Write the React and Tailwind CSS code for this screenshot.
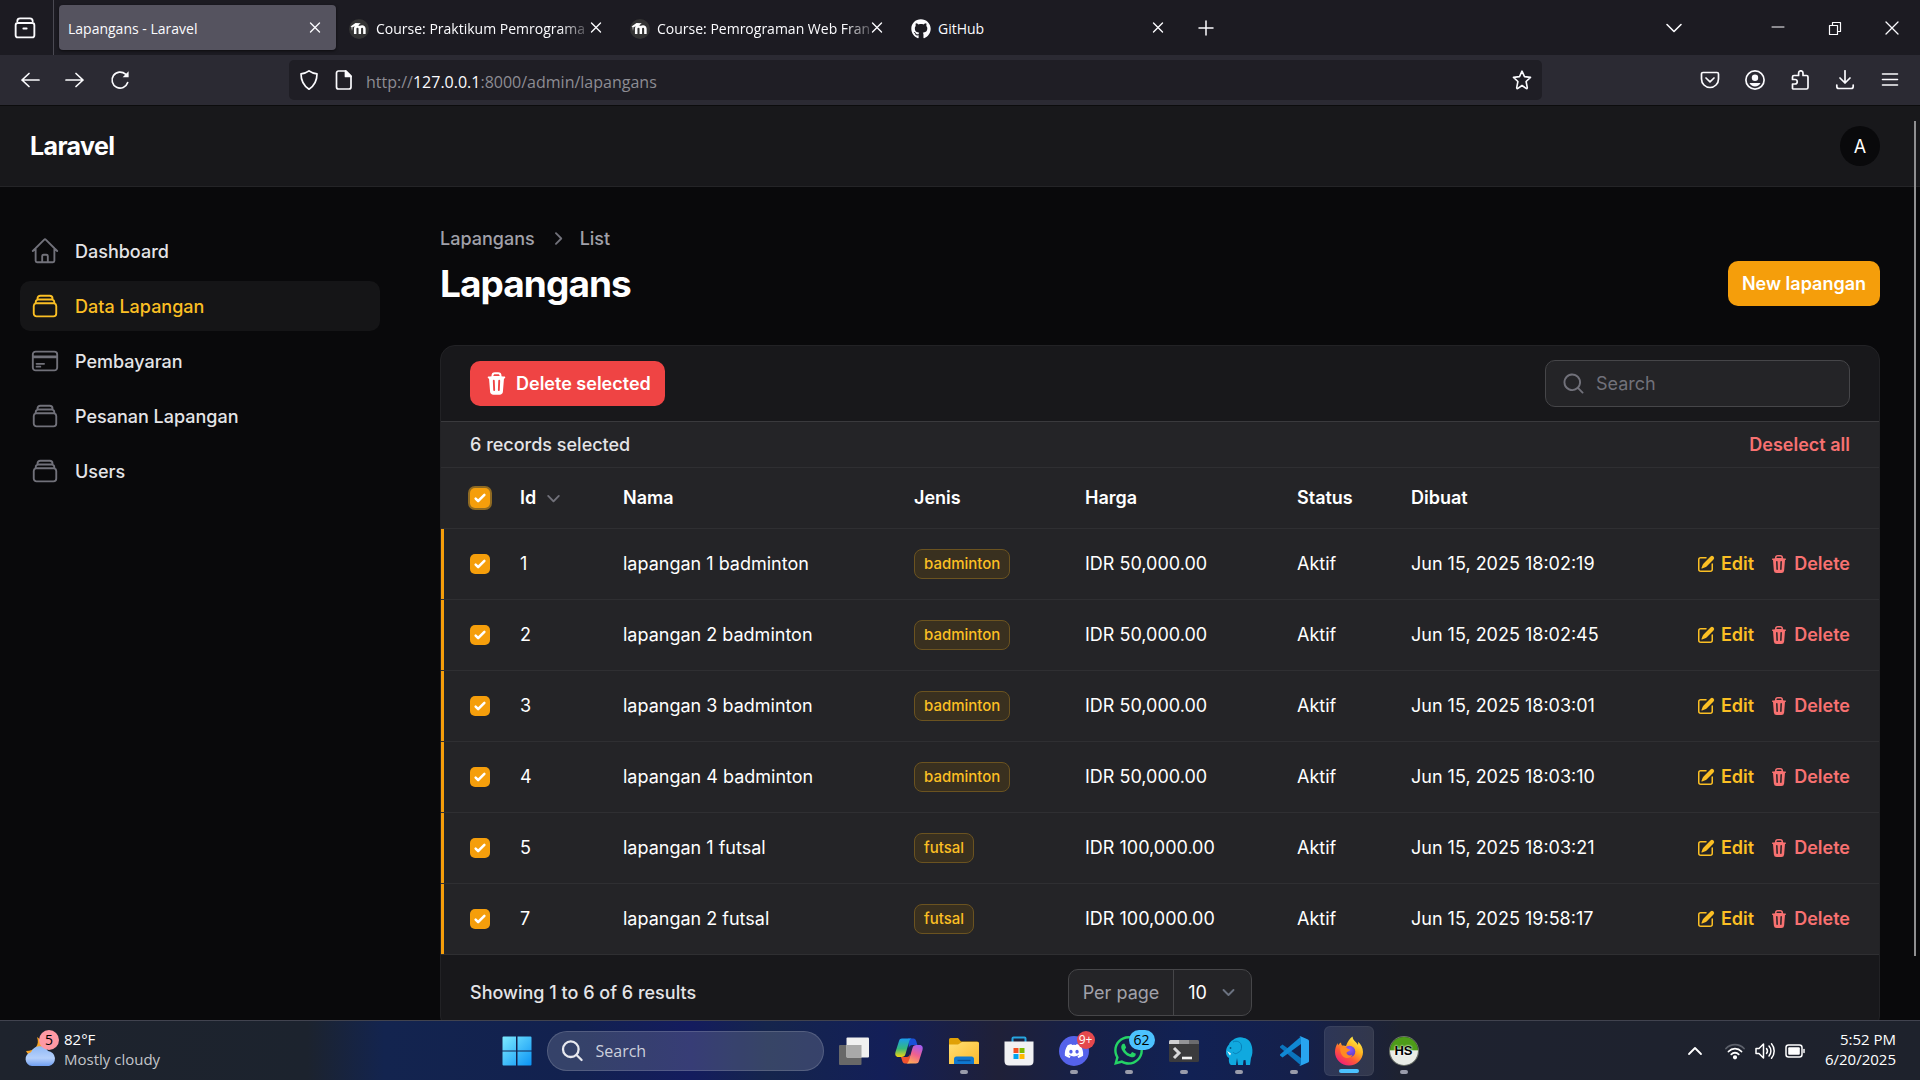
import React from "react";
import {
  HiOutlineHome,
  HiOutlineRectangleStack,
  HiOutlineCreditCard,
  HiMiniTrash,
  HiMiniPencilSquare,
  HiMiniMagnifyingGlass,
  HiMiniChevronDown,
  HiMiniChevronRight,
} from "react-icons/hi2";
import { FaGithub, FaDiscord, FaWhatsapp } from "react-icons/fa";

const CHROME_FONT = "font-['Open_Sans','Noto_Sans',sans-serif]";

function Line({ d, className = "size-5", w = 1.6, children }) {
  return (
    <svg
      viewBox="0 0 20 20"
      className={className}
      fill="none"
      stroke="currentColor"
      strokeWidth={w}
      strokeLinecap="round"
      strokeLinejoin="round"
      aria-hidden="true"
    >
      {d && <path d={d} />}
      {children}
    </svg>
  );
}

function MoodleIcon() {
  return (
    <svg viewBox="0 0 20 20" className="size-5 shrink-0" aria-hidden="true">
      <circle cx="10" cy="10" r="10" fill="#343434" />
      <path
        d="M6.2 15V9.8a2.3 2.3 0 0 1 4.6 0V15M10.8 15V9.8a2.3 2.3 0 0 1 4.6 0V15"
        fill="none"
        stroke="#fff"
        strokeWidth="2.5"
      />
      <path d="M1.5 7.6 6.5 4l5.2.3-3.2 2.6-5 1.2-.5 4-.5-4z" fill="#fff" />
    </svg>
  );
}

const tabs = [
  { title: "Lapangans - Laravel", active: true },
  { title: "Course: Praktikum Pemrograma", icon: <MoodleIcon />, fade: true },
  { title: "Course: Pemrograman Web Fran", icon: <MoodleIcon />, fade: true },
  { title: "GitHub", icon: <FaGithub className="size-5 shrink-0" /> },
];

function Tab({ title, icon, active, fade }) {
  return (
    <div
      className={`flex h-[45px] w-[277px] items-center rounded pl-[9px] pr-2 ${
        active ? "bg-[#55535f] shadow-[0_1px_3px_rgba(0,0,0,0.6)]" : ""
      }`}
    >
      <button className="flex min-w-0 flex-1 items-center gap-[7px] pt-0.5 text-left">
        {icon}
        <span
          className={`whitespace-nowrap ${
            fade ? "[mask-image:linear-gradient(to_right,black_88%,rgba(0,0,0,0.25))]" : ""
          }`}
        >
          {title}
        </span>
      </button>
      <button aria-label="Close tab" className="grid w-[26px] shrink-0 place-items-center">
        <Line className="size-5" d="M5.5 5l9 9M14.5 5l-9 9" w={1.4} />
      </button>
    </div>
  );
}

function TabBar() {
  return (
    <div className="flex h-[55px] shrink-0 items-center bg-[#1c1b22] text-[14px]">
      <div className="flex h-full w-[54px] shrink-0 items-center justify-center border-r border-[#4a4952] pr-1">
        <button aria-label="Recent browsing">
          <Line className="size-[22px]" w={1.7}>
            <path d="M3 3.8C3 2 4 1.2 5.5 1.2h9C16 1.2 17 2 17 3.8" />
            <rect x="1.5" y="5.5" width="17" height="13" rx="2" />
            <path d="M8.5 10.5h3" w="2" />
          </Line>
        </button>
      </div>
      <div className="ml-[5px] flex gap-1">
        {tabs.map((t, i) => (
          <Tab key={i} {...t} />
        ))}
      </div>
      <button aria-label="New tab" className="ml-[17px]">
        <Line className="size-5" d="M10 3v14M3 10h14" w={1.5} />
      </button>
      <div className="ml-auto flex items-center pr-[18px]">
        <button aria-label="List all tabs" className="mr-[84px]">
          <Line className="size-5" d="M3 6.5l7 7 7-7" w={1.6} />
        </button>
        <div className="flex items-center gap-[37px]">
          <button aria-label="Minimize">
            <Line className="size-5" d="M4 9h12" w={1} />
          </button>
          <button aria-label="Restore">
            <Line className="size-5" w={1.2}>
              <path d="M4.5 7.5h8v9h-8zM7.5 7.5v-3h8v9h-3" />
            </Line>
          </button>
          <button aria-label="Close">
            <Line className="size-5" d="M4 4l12 12M16 4L4 16" w={1.3} />
          </button>
        </div>
      </div>
    </div>
  );
}

function AddressBar() {
  return (
    <div className="flex h-[51px] shrink-0 items-center border-b border-[#0c0c0d] bg-[#2b2a33]">
      <div className="flex w-[289px] shrink-0 items-center gap-[25px] pl-5">
        <button aria-label="Back">
          <Line d="M9 3.5L2 10l7 6.5M2 10h17" w={1.7} />
        </button>
        <button aria-label="Forward">
          <Line d="M11 3.5L18 10l-7 6.5M18 10H1" w={1.7} />
        </button>
        <button aria-label="Reload">
          <Line w={1.7}>
            <path d="M17.7 12.5A8 8 0 1 1 15.5 4.2L17 5.6" />
            <path d="M18.6 1.2v6h-6z" fill="currentColor" stroke="none" />
          </Line>
        </button>
      </div>
      <div className="flex h-10 flex-1 items-center rounded-[5px] bg-[#1f1e25] pl-2.5 pr-2.5">
        <Line
          className="size-5 shrink-0"
          d="M10 .8c2.2 1.7 4.8 2.6 8 3 0 6.7-2.3 11.8-8 15.4C4.3 15.6 2 10.5 2 3.8c3.2-.4 5.800-1.300 8-3z"
          w={1.7}
        />
        <Line className="ml-[15px] size-5 shrink-0" w={1.7}>
          <path d="M4.500 1h7.500l5 5v11a2 2 0 0 1-2 2H4.500a2 2 0 0 1-2-2V3a2 2 0 0 1 2-2z" />
          <path d="M11.500 1v5.500H17z" fill="currentColor" />
        </Line>
        <a href="#url" className="ml-3 flex-1 pt-1 text-[16px] leading-6 text-[#8d8c93]">
          http://<span className="text-[#fbfbfe]">127.0.0.1</span>:8000/admin/lapangans
        </a>
        <button aria-label="Bookmark this page">
          <Line
            d="M10 1.200l2.500 5.400 6 .8-4.400 4.100 1.200 6.100c.1.900-.5 1.200-1.200.8L10 15.500l-4.100 2.900c-.7.400-1.300.1-1.200-.8l1.200-6.100L1.500 7.400l6-.8z"
            w={1.6}
          />
        </button>
      </div>
      <div className="flex w-[378px] shrink-0 items-center justify-end gap-[25px] pr-5">
        <button aria-label="Save to Pocket">
          <Line w={1.7}>
            <path d="M3 2.500h14a1.500 1.500 0 0 1 1.500 1.500v5a8.500 8.500 0 0 1-17 0V4A1.500 1.500 0 0 1 3 2.500z" />
            <path d="M6 8l4 3.800L14 8" />
          </Line>
        </button>
        <button aria-label="Account">
          <Line w={1.7}>
            <circle cx="10" cy="10" r="9.100" />
            <circle cx="10" cy="7.800" r="3.200" fill="currentColor" stroke="none" />
            <path d="M4.500 13h11c-1 2.200-3 3.500-5.500 3.500S5.500 15.200 4.500 13z" fill="currentColor" stroke="none" />
          </Line>
        </button>
        <button aria-label="Extensions">
          <Line
            d="M3 19h13.500a1.500 1.500 0 0 0 1.500-1.500V7A1.500 1.500 0 0 0 16.500 5.500H13V3a2.200 2.200 0 0 0-4.400 0v2.500H4A1.500 1.500 0 0 0 2.500 7v2.500H5a2 2 0 0 1 0 4.500H2.500v4.500z"
            w={1.7}
          />
        </button>
        <button aria-label="Downloads">
          <Line d="M10 .8V13M5 8l5 5 5-5M1.800 15v1.500A2 2 0 0 0 3.800 18.500h12.400a2 2 0 0 0 2-2V15" w={1.7} />
        </button>
        <button aria-label="Open menu">
          <Line d="M2.500 4h15M2.500 9.500h15M2.500 15h15" w={1.6} />
        </button>
      </div>
    </div>
  );
}

const navItems = [
  { label: "Dashboard", Icon: HiOutlineHome },
  { label: "Data Lapangan", Icon: HiOutlineRectangleStack, active: true },
  { label: "Pembayaran", Icon: HiOutlineCreditCard },
  { label: "Pesanan Lapangan", Icon: HiOutlineRectangleStack },
  { label: "Users", Icon: HiOutlineRectangleStack },
];

function Sidebar() {
  return (
    <nav className="flex w-[400px] shrink-0 flex-col gap-[5px] px-5 pt-[39px]">
      {navItems.map(({ label, Icon, active }) => (
        <a
          key={label}
          href={"#" + label}
          className={`flex h-[50px] items-center gap-[15px] rounded-[10px] px-2.5 font-medium ${
            active ? "bg-[#151517] text-[#fbbf24]" : "text-[#e4e4e7]"
          }`}
        >
          <Icon className={`size-[30px] ${active ? "" : "text-[#71717a]"}`} />
          {label}
        </a>
      ))}
    </nav>
  );
}

const rows = [
  [1, "lapangan 1 badminton", "badminton", "IDR 50,000.00", "Jun 15, 2025 18:02:19"],
  [2, "lapangan 2 badminton", "badminton", "IDR 50,000.00", "Jun 15, 2025 18:02:45"],
  [3, "lapangan 3 badminton", "badminton", "IDR 50,000.00", "Jun 15, 2025 18:03:01"],
  [4, "lapangan 4 badminton", "badminton", "IDR 50,000.00", "Jun 15, 2025 18:03:10"],
  [5, "lapangan 1 futsal", "futsal", "IDR 100,000.00", "Jun 15, 2025 18:03:21"],
  [7, "lapangan 2 futsal", "futsal", "IDR 100,000.00", "Jun 15, 2025 19:58:17"],
];

function Check({ label, focused }) {
  return (
    <span className="grid size-5 place-items-center">
      <input
        type="checkbox"
        defaultChecked
        aria-label={label}
        className={`peer col-start-1 row-start-1 size-5 appearance-none rounded-[5px] bg-[#3f3f46] checked:bg-[#f59e0b] ${
          focused ? "ring-2 ring-[#8f6a22]" : ""
        }`}
      />
      <svg
        viewBox="0 0 16 16"
        fill="#fff"
        className="pointer-events-none invisible col-start-1 row-start-1 size-5 peer-checked:visible"
        aria-hidden="true"
      >
        <path d="M12.207 4.793a1 1 0 010 1.414l-5 5a1 1 0 01-1.414 0l-2-2a1 1 0 011.414-1.414L6.500 9.086l4.293-4.293a1 1 0 011.414 0z" />
      </svg>
    </span>
  );
}

function LapanganTable() {
  const th = "px-[15px] text-left font-semibold text-white";
  const td = "px-[15px] text-white whitespace-nowrap";
  return (
    <table className="w-full table-fixed border-collapse bg-[#242427]">
      <colgroup>
        <col className="w-16" />
        <col className="w-[103px]" />
        <col className="w-[291px]" />
        <col className="w-[171px]" />
        <col className="w-[212px]" />
        <col className="w-[114px]" />
        <col className="w-[230px]" />
        <col />
      </colgroup>
      <thead>
        <tr className="h-[60px] border-b border-[#2f2f32]">
          <th className="pl-[29px]">
            <Check label="Select all records" focused />
          </th>
          <th className={th}>
            <button className="flex items-center gap-[5px] font-semibold">
              Id
              <HiMiniChevronDown className="size-[25px] text-[#71717a]" />
            </button>
          </th>
          <th className={th}>Nama</th>
          <th className={th}>Jenis</th>
          <th className={th}>Harga</th>
          <th className={th}>Status</th>
          <th className={th}>Dibuat</th>
          <th aria-label="Actions" />
        </tr>
      </thead>
      <tbody>
        {rows.map(([id, nama, jenis, harga, dibuat]) => (
          <tr key={id} className="h-[71px] border-b border-[#2f2f32]">
            <td className="pl-[29px] shadow-[inset_3px_0_0_#f59e0b]">
              <Check label={"Select record " + id} />
            </td>
            <td className={td}>{id}</td>
            <td className={td}>{nama}</td>
            <td className={td}>
              <span className="inline-flex h-[30px] items-center rounded-[8px] border border-[#6b5320] bg-[#39301f] px-[9px] align-middle text-[15px] font-medium text-[#fbbf24]">
                {jenis}
              </span>
            </td>
            <td className={td}>{harga}</td>
            <td className={td}>Aktif</td>
            <td className={td}>{dibuat}</td>
            <td className="whitespace-nowrap pr-[29px]">
              <div className="flex justify-end gap-[15px] font-semibold">
                <a href={"#edit-" + id} className="flex items-center gap-[5px] text-[#fbbf24]">
                  <HiMiniPencilSquare className="size-5" />
                  Edit
                </a>
                <button className="flex items-center gap-[5px] text-[#f87171]">
                  <HiMiniTrash className="size-5" />
                  Delete
                </button>
              </div>
            </td>
          </tr>
        ))}
      </tbody>
    </table>
  );
}

function TableCard() {
  return (
    <section className="mt-[39px] overflow-hidden rounded-[15px] border border-[#222225] bg-[#18181b]">
      <div className="flex items-center justify-between border-b border-[#3a3a3d] px-[29px] py-3.5">
        <button className="flex h-[45px] items-center gap-[7px] rounded-[10px] bg-[#ef4444] px-3.5 font-semibold text-white">
          <HiMiniTrash className="size-[25px]" />
          Delete selected
        </button>
        <label className="flex h-[47px] w-[305px] items-center gap-2.5 rounded-[10px] border border-[#464649] bg-[#242427] px-[15px]">
          <HiMiniMagnifyingGlass className="size-[25px] shrink-0 text-[#71717a]" />
          <input
            type="search"
            aria-label="Search"
            placeholder="Search"
            className="min-w-0 flex-1 bg-transparent text-white outline-none placeholder:text-[#71717a]"
          />
        </label>
      </div>
      <div className="flex h-[46px] items-center justify-between border-b border-[#2f2f32] bg-[#242427] px-[29px]">
        <span className="font-medium text-[#e4e4e7]">6 records selected</span>
        <button className="font-semibold text-[#f87171]">Deselect all</button>
      </div>
      <LapanganTable />
      <div className="grid grid-cols-[1fr_auto_1fr] items-center px-[29px] py-3.5">
        <span className="font-medium text-[#e4e4e7]">Showing 1 to 6 of 6 results</span>
        <label className="flex h-[47px] items-center rounded-[10px] border border-[#464649] bg-[#242427]">
          <span className="flex h-full items-center border-r border-[#464649] px-3.5 text-[#a1a1aa]">Per page</span>
          <span className="grid items-center">
            <select
              defaultValue="10"
              className="col-start-1 row-start-1 w-[77px] appearance-none bg-transparent pl-3.5 text-white outline-none"
            >
              <option value="5">5</option>
              <option value="10">10</option>
              <option value="25">25</option>
              <option value="50">50</option>
            </select>
            <Line
              className="pointer-events-none col-start-1 row-start-1 mr-2.5 size-[25px] justify-self-end text-[#6b7280]"
              d="M6 8l4 4 4-4"
              w={1.5}
            />
          </span>
        </label>
      </div>
    </section>
  );
}

function AdminPage() {
  return (
    <div className="relative flex min-h-0 flex-1 flex-col overflow-hidden bg-[#09090b] font-['Inter',sans-serif] text-[18px] leading-[25px]">
      <header className="flex h-[81px] shrink-0 items-center justify-between border-b border-[#242427] bg-[#18181b] pl-[30px] pr-10">
        <a href="#home" className="text-[25px] font-bold tracking-tight text-white">
          Laravel
        </a>
        <button aria-label="User menu" className="grid size-10 place-items-center rounded-full bg-[#09090b] text-white">
          A
        </button>
      </header>
      <div className="flex">
        <Sidebar />
        <main className="min-w-0 flex-1 pl-10 pr-10 pt-[39px]">
          <div className="flex items-end justify-between">
            <div>
              <nav className="flex items-center gap-2.5 font-medium text-[#a1a1aa]">
                <a href="#lapangans">Lapangans</a>
                <HiMiniChevronRight className="size-[25px] text-[#71717a]" />
                <span>List</span>
              </nav>
              <h1 className="mt-2.5 text-[37px] font-bold leading-[45px] tracking-tight text-white">Lapangans</h1>
            </div>
            <button className="h-[45px] rounded-[10px] bg-[#f59e0b] px-3.5 font-semibold text-white">
              New lapangan
            </button>
          </div>
          <TableCard />
        </main>
      </div>
      <div className="absolute bottom-16 right-1 top-[15px] w-0.5 bg-[#8f8f91]" />
    </div>
  );
}

function WeatherIcon() {
  return (
    <svg viewBox="0 0 36 36" className="size-9" aria-hidden="true">
      <defs>
        <linearGradient id="cloud" x1="0" y1="0" x2="0" y2="1">
          <stop offset="0" stopColor="#8fb8f5" />
          <stop offset="0.6" stopColor="#b5d0fb" />
          <stop offset="1" stopColor="#6f9ef0" />
        </linearGradient>
      </defs>
      <path d="M14 6c3 8-2 14-11 14 2 5 8 6 12 4 6-3 6-14-1-18z" fill="#f7a325" />
      <path d="M9 35a7 7 0 0 1-1-13.800A9.500 9.500 0 0 1 25 20a7.600 7.600 0 0 1 1 15z" fill="url(#cloud)" />
    </svg>
  );
}

function StartIcon() {
  return (
    <svg viewBox="0 0 30 30" className="size-[30px]" aria-hidden="true">
      <defs>
        <linearGradient id="win" x1="0" y1="0" x2="1" y2="1">
          <stop offset="0" stopColor="#7deaff" />
          <stop offset="1" stopColor="#0a93f5" />
        </linearGradient>
      </defs>
      <path
        d="M.5 1.500q0-1 1-1H14v14H.5zM15.500.5h13q1 0 1 1v13h-14zM.5 15.500H14v14H1.500q-1 0-1-1zM15.500 15.500h14v13q0 1-1 1h-13z"
        fill="url(#win)"
      />
    </svg>
  );
}

function TaskViewIcon() {
  return (
    <svg viewBox="0 0 30 30" className="size-[30px]" aria-hidden="true">
      <rect x="0" y="9" width="22.500" height="20" rx="1" fill="#686868" />
      <rect x="7.500" y="1.500" width="22.500" height="20" rx="1" fill="#f0f0f0" />
      <path d="M7.500 9h15v12.500h-15z" fill="#a9a9a9" />
    </svg>
  );
}

function CopilotIcon() {
  return (
    <svg viewBox="0 0 30 30" className="size-[30px]" aria-hidden="true">
      <defs>
        <linearGradient id="cpa" x1="0" y1="0" x2="0" y2="1">
          <stop offset="0" stopColor="#1a9cf0" />
          <stop offset="0.55" stopColor="#35b97c" />
          <stop offset="1" stopColor="#f6d40e" />
        </linearGradient>
        <linearGradient id="cpb" x1="0.7" y1="0" x2="0.3" y2="1">
          <stop offset="0" stopColor="#a45cf0" />
          <stop offset="0.5" stopColor="#f0608e" />
          <stop offset="1" stopColor="#ffab58" />
        </linearGradient>
      </defs>
      <path d="M14 2.500h5.500c1.500 0 2.200 1 2.700 2.500l1.200 4h-5c-2 0-3 1-3.500 3z" fill="#1a50d8" />
      <path d="M15.500 27.500H11c-1.600 0-2.300-1-2.700-2.500L7 21h5.500c2 0 3-1 3.500-3z" fill="#f0522e" />
      <path
        d="M8 2.500h9.500c-1.500.7-2 1.700-2.500 3.500l-3.500 12c-.7 2.200-1.800 3-4 3H4.500C1.500 21 .8 18.500 1.500 16L5 5c.6-1.800 1.500-2.500 3-2.500z"
        fill="url(#cpa)"
      />
      <path
        d="M22 27.500h-9.500c1.500-.7 2-1.700 2.500-3.500l3.500-12c.7-2.200 1.800-3 4-3h3c3 0 3.700 2.500 3 5L25 25c-.6 1.800-1.500 2.500-3 2.500z"
        fill="url(#cpb)"
      />
    </svg>
  );
}

function ExplorerIcon() {
  return (
    <svg viewBox="0 0 30 30" className="size-[30px]" aria-hidden="true">
      <defs>
        <linearGradient id="fold" x1="0" y1="0" x2="1" y2="1">
          <stop offset="0" stopColor="#ffdf73" />
          <stop offset="1" stopColor="#fcb92c" />
        </linearGradient>
      </defs>
      <path d="M0 3.500Q0 2 1.500 2H9l3 3.500h16q2 0 2 2V12H0z" fill="#e0a106" />
      <path d="M0 8.500h9L13 6h15.500Q30 6 30 7.500V28H0z" fill="url(#fold)" />
      <path d="M5 28v-5q0-2.500 2.500-2.500h15Q25 20.500 25 23v5z" fill="#0f78d0" />
      <path d="M8.500 24.500h13" stroke="#0a4f94" strokeWidth="1.4" />
    </svg>
  );
}

function StoreIcon() {
  return (
    <svg viewBox="0 0 30 30" className="size-[30px]" aria-hidden="true">
      <path d="M8.500 7V2.500q0-1 1-1h11q1 0 1 1V7" fill="none" stroke="#27a5e0" strokeWidth="2" />
      <path d="M.5 5.500h29V25q0 4.500-4.500 4.500H5Q.5 29.500.5 25z" fill="#f1f1f3" />
      <path d="M9.500 12h5v5h-5z" fill="#f25022" />
      <path d="M15.500 12h5v5h-5z" fill="#7fba00" />
      <path d="M9.500 18h5v5h-5z" fill="#00a4ef" />
      <path d="M15.500 18h5v5h-5z" fill="#ffb900" />
    </svg>
  );
}

function DiscordIcon() {
  return (
    <span className="grid size-[30px] place-items-center rounded-full bg-[#5562ea]">
      <FaDiscord className="size-5 text-white" />
    </span>
  );
}

function TerminalIcon() {
  return (
    <svg viewBox="0 0 30 30" className="size-[30px]" aria-hidden="true">
      <rect x="0" y="4" width="30" height="22" rx="1.500" fill="#3b3b3d" />
      <path d="M0 8V5.500Q0 4 1.500 4H10v4z" fill="#cfcfd2" />
      <path d="M10 4h10v4H10z" fill="#949497" />
      <path d="M20 4h8.500Q30 4 30 5.500V8H20z" fill="#6b6b6e" />
      <path d="M5 12l5 5-5 5" fill="none" stroke="#d8d8da" strokeWidth="3" />
      <path d="M13 22h10" stroke="#f4f4f4" strokeWidth="2.6" />
    </svg>
  );
}

function ElephantIcon() {
  return (
    <svg viewBox="0 0 30 30" className="size-[30px]" aria-hidden="true">
      <path
        d="M9 4c3-3 8-3.500 11-2 4 .5 7 4 8 9 .8 4 .5 8-1 11l-1 7h-4l-.5-5-2 .3L19 29h-5l-1-7-1 7H7c-2-1-2.500-4-2-7-2-1-3.500-4-3-7 .3-3 1.500-5 3-6.500C5.500 6.500 7 5 9 4z"
        fill="#10a9df"
      />
      <path d="M9 6c4-2 8 0 8.500 4s-1.500 6-3.500 6.500c-2 2-4 1-5-.5" fill="none" stroke="#0780b8" strokeWidth="1" />
      <path d="M3 15l4 2.500-1 2z" fill="#fff" />
      <circle cx="6.500" cy="12" r=".9" fill="#04537c" />
    </svg>
  );
}

function CodeIcon() {
  return (
    <svg viewBox="0 0 30 30" className="size-[30px]" aria-hidden="true">
      <path d="M1 10.500 3.500 8.500 22 22v7.500L1 11.500z" fill="#0b74bd" />
      <path d="M1 19.500 3.500 21.500 22 8V.5L1 18.500z" fill="#1088d4" />
      <path
        d="M21.500.3 29 3.500q1 .5 1 1.500v20q0 1-1 1.500l-7.500 3.200q-1 .3-1.800-.5 2.300 1 2.300-2V2.800q0-3-2.300-2 .8-.8 1.800-.5z"
        fill="#28a4f0"
      />
    </svg>
  );
}

function FirefoxIcon() {
  return (
    <svg viewBox="0 0 30 30" className="size-[30px]" aria-hidden="true">
      <defs>
        <linearGradient id="fxa" x1="0.85" y1="0.1" x2="0.25" y2="1">
          <stop offset="0" stopColor="#fff04a" />
          <stop offset="0.35" stopColor="#ffb01f" />
          <stop offset="0.65" stopColor="#ff5a36" />
          <stop offset="1" stopColor="#f01a7c" />
        </linearGradient>
        <radialGradient id="fxb" cx="0.5" cy="0.3" r="0.7">
          <stop offset="0" stopColor="#9059ff" />
          <stop offset="1" stopColor="#5a3cc0" />
        </radialGradient>
      </defs>
      <path
        d="M18.500.5c.2 3 2 4.200 3.700 6 .8.800 1.400 1.600 1.800 2.500.3-1.200.2-2.200-.1-3.300C27 8 29 12 29 16c0 7.500-6.200 13.500-14 13.500S1 23.500 1 16c0-3.500 1-6.500 2.700-9 0 .8.100 1.500.4 2.200C5 8 6 7.100 7 6.500c0 1 .3 2 1 3 1.500-.3 3 0 4 .5 1.500-4 3.500-7.500 6.500-9.500z"
        fill="url(#fxa)"
      />
      <circle cx="15.500" cy="15.500" r="5.800" fill="url(#fxb)" />
      <path
        d="M6.500 11.500c3-1.500 6-.5 7.500 1.500 1.200 0 2 .6 2 1.300-1 1.400-3 1-3.500 2.500 0 2 3 3.500 6 2-1 2.500-4 4-7 3-4-1.400-6-6-5-10.300z"
        fill="#ff8a22"
      />
    </svg>
  );
}

function HeidiIcon() {
  return (
    <span className="grid size-7 place-items-center rounded-full bg-linear-to-b from-[#4d9c18] from-45% to-[#e9ece6] to-50% font-['Liberation_Sans',sans-serif] text-[13px] font-bold leading-4 text-black ring-1 ring-[#6d7468] [text-shadow:0_0_2px_#fff,0_0_2px_#fff]">
      HS
    </span>
  );
}

const apps = [
  { name: "Task view", icon: <TaskViewIcon /> },
  { name: "Copilot", icon: <CopilotIcon /> },
  { name: "File Explorer", icon: <ExplorerIcon />, open: true },
  { name: "Microsoft Store", icon: <StoreIcon /> },
  { name: "Discord", icon: <DiscordIcon />, open: true, badge: "9+", tone: "red" },
  { name: "WhatsApp", icon: <FaWhatsapp className="size-[33px] text-[#25d366]" />, open: true, badge: "62" },
  { name: "Terminal", icon: <TerminalIcon />, open: true },
  { name: "Database", icon: <ElephantIcon />, open: true },
  { name: "Code editor", icon: <CodeIcon />, open: true },
  { name: "Firefox", icon: <FirefoxIcon />, open: true, active: true },
  { name: "HeidiSQL", icon: <HeidiIcon />, open: true },
];

function AppButton({ name, icon, open, active, badge, tone }) {
  return (
    <button
      aria-label={name}
      className={`relative grid size-[50px] place-items-center rounded-md ${
        active ? "border border-white/5 bg-white/10" : ""
      }`}
    >
      {icon}
      {badge && (
        <span
          className={`absolute grid place-items-center rounded-full ${
            tone === "red"
              ? "right-1 top-[5px] size-[18px] bg-[#e5484d] text-[12px] leading-4 text-white"
              : "-right-px top-1 h-5 w-[26px] bg-[#4cc2ff] text-[14px] leading-5 text-black"
          }`}
        >
          {badge}
        </span>
      )}
      {open && (
        <span
          className={`absolute bottom-0.5 left-1/2 h-1 -translate-x-1/2 rounded-full ${
            active ? "w-5 bg-[#4cc2ff]" : "w-2 bg-[#9a9cab]"
          }`}
        />
      )}
    </button>
  );
}

function Taskbar() {
  return (
    <footer className="grid h-[60px] shrink-0 grid-cols-[1fr_auto_1fr] items-center border-t border-[#41434f] bg-[linear-gradient(90deg,#1e232d_0%,#1c232e_16%,#13244f_20%,#12214f_30%,#141c5e_36%,#15254c_40%,#131f58_46%,#1f2038_52%,#172046_56%,#112154_62%,#15204a_68%,#1e2230_73%,#1e222c_100%)] text-[15px] leading-5 text-white">
      <button className="flex items-center gap-[5px] justify-self-start pb-1 pl-[23px] text-left">
        <span className="relative">
          <WeatherIcon />
          <span className="absolute -top-px left-4 grid size-5 place-items-center rounded-full bg-[#ff99a4] text-[14px] leading-5 text-black">
            5
          </span>
        </span>
        <span>
          <span className="block">82°F</span>
          <span className="block text-[#c3c5ca]">Mostly cloudy</span>
        </span>
      </button>
      <div className="flex items-center gap-[5px]">
        <button aria-label="Start" className="grid size-[50px] place-items-center">
          <StartIcon />
        </button>
        <label className="flex h-10 w-[277px] items-center gap-3 rounded-full border border-white/15 bg-white/15 pl-3">
          <Line className="size-6 shrink-0 text-[#e8e9ef]" w={1.9}>
            <circle cx="9" cy="8.500" r="6.500" />
            <path d="M14 13.500l4 4" />
          </Line>
          <input
            type="search"
            aria-label="Search"
            placeholder="Search"
            className="min-w-0 flex-1 bg-transparent text-[16px] outline-none placeholder:text-[#cdd0dc]"
          />
        </label>
        {apps.map((a) => (
          <AppButton key={a.name} {...a} />
        ))}
      </div>
      <div className="flex items-center justify-self-end pr-6">
        <button aria-label="Show hidden icons" className="mr-5">
          <Line className="size-5" d="M4 13l6-6 6 6" w={1.8} />
        </button>
        <button aria-label="Network, volume and battery" className="flex items-center gap-2.5">
          <Line className="size-5" w={1.8}>
            <path d="M1 7.500a12.500 12.500 0 0 1 18 0" stroke="#5c606a" />
            <path d="M3.500 10.500a9 9 0 0 1 13 0M6.300 13.300a5.200 5.200 0 0 1 7.400 0" />
            <circle cx="10" cy="16.300" r="1.200" fill="currentColor" />
          </Line>
          <Line className="size-5" w={1.5}>
            <path d="M1 7.500h3L8.500 3v14L4 12.500H1z" />
            <path d="M11.500 7.500a4 4 0 0 1 0 5M14 5a7.500 7.500 0 0 1 0 10M16.500 2.800a11 11 0 0 1 0 14.400" />
          </Line>
          <Line className="size-5" w={1.5}>
            <rect x="1" y="4" width="16" height="12" rx="2.500" />
            <rect x="3.200" y="6.200" width="11.600" height="7.600" rx="1" fill="currentColor" stroke="none" />
            <path d="M19 8.500v3" />
          </Line>
        </button>
        <button className="ml-5 pb-1 text-right">
          <span className="block">5:52 PM</span>
          <span className="block">6/20/2025</span>
        </button>
      </div>
    </footer>
  );
}

export default function App() {
  return (
    <div className={`flex h-screen flex-col overflow-hidden bg-[#09090b] text-[#fbfbfe] ${CHROME_FONT}`}>
      <TabBar />
      <AddressBar />
      <AdminPage />
      <Taskbar />
    </div>
  );
}
